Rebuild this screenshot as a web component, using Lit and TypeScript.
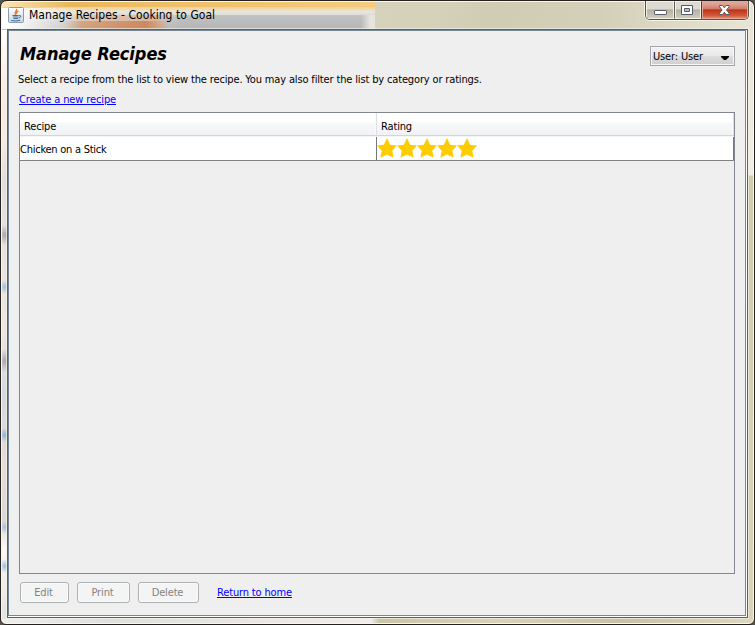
import { LitElement, html, css, svg } from "lit";
import { customElement, state } from "lit/decorators.js";

interface Recipe {
  name: string;
  rating: number;
}

@customElement("title-bar")
export class TitleBar extends LitElement {
  static styles = css`
    :host { display: flex; height: 26px; color: #000; }
    .java { width: 16px; height: 16px; margin: 5px 0 0 6px; flex: none; }
    .title { margin: 3px 0 0 5px; font-size: 12px; line-height: 20px; white-space: nowrap; letter-spacing: 0.045px; flex: 1; }
    .controls { display: flex; height: 18px; margin: -1px 4px 0 0; border: 1px solid #55534b; border-top: 0; border-radius: 0 0 5px 5px; overflow: hidden; box-shadow: 0 1px 0 #f4f1e3, -1px 0 0 #f4f1e3, 1px 0 0 #f4f1e3; }
    .control { box-sizing: border-box; width: 28px; border: 1px solid #f3f1e8; background: linear-gradient(#dddbd0 0 45%, #b2b0a2 48%, #cfcdbd); }
    .control + .control { border-left: 1px solid #5d5b52; width: 27px; box-shadow: inset 1px 0 0 #f3f1e8; }
    .control + .control.close { width: 47px; border-color: #e6a89b; border-left-color: #6d2c20; background: linear-gradient(#e0a496 0 10%, #d07a66 45%, #bb3218 48%, #d6583a 85%, #e18a6a); box-shadow: inset 1px 0 0 #e6a89b; }
    .control svg { display: block; width: 100%; height: 100%; }
  `;

  render() {
    return html`
      <svg class="java" viewBox="0 0 16 16">
        <defs>
          <linearGradient id="tile" x2="0" y2="1"><stop stop-color="#fff" /><stop offset="1" stop-color="#c9d6df" /></linearGradient>
        </defs>
        <rect x=".5" y=".5" width="15" height="15" rx="1" fill="url(#tile)" stroke="#8a9caa" />
        <path d="M8.6 1.8C9.6 4 5.4 4.8 7.6 8M10.4 3.8C8 5 8.2 6 9 7" fill="none" stroke="#e57a20" stroke-width="1.3" />
        <path d="M4.5 8.5h6.2M5 10h5.4M5.6 11.5h4.4M3.2 13.5q4.8 1 9-.2M11 8.7q2.6-.4 1.7 1.1-.6.9-2 1.2" fill="none" stroke="#426f93" />
      </svg>
      <div class="title">Manage Recipes - Cooking to Goal</div>
      <div class="controls">
        <div class="control">
          <svg viewBox="0 0 26 16"><rect x="7.5" y="8.5" width="12" height="4" rx=".6" fill="#fff" stroke="#565a66" /></svg>
        </div>
        <div class="control">
          <svg viewBox="0 0 25 16">
            <path d="M6.5 3.500h11v9h-11z" fill="#fff" stroke="#565a66" />
            <path d="M9.500 6.500h5v3h-5z" fill="#c1bfb3" stroke="#565a66" />
          </svg>
        </div>
        <div class="control close">
          <svg viewBox="0 0 45 16"><path d="M17.500 3.500h3l1.800 2.300 1.800-2.300h3v1.300L24.500 8l2.600 3.200v1.300h-3l-1.800-2.300-1.800 2.300h-3v-1.300L20.100 8l-2.600-3.200z" fill="#fff" stroke="#565a66" /></svg>
        </div>
      </div>
    `;
  }
}

@customElement("star-rating")
export class StarRating extends LitElement {
  static properties = { value: { type: Number } };
  declare value: number;

  static styles = css`
    :host { display: flex; }
    svg { width: 20px; height: 22px; display: block; }
  `;

  render() {
    return Array.from({ length: this.value ?? 0 }, () => html`
      <svg viewBox="0 0 20 22">${svg`<path fill="#fc0" d="M10 1l3.200 6.700 6.800.9-4.700 5.100 1.300 7.100L10 17.600l-6.600 3.200 1.300-7.100L0 8.600l6.800-.9z" />`}</svg>
    `);
  }
}

@customElement("recipe-table")
export class RecipeTable extends LitElement {
  static properties = { recipes: { attribute: false } };
  declare recipes: Recipe[];

  static styles = css`
    :host { display: block; box-sizing: border-box; border: 1px solid #828790; }
    .row { display: grid; grid-template-columns: 357px 357px; }
    .head { height: 24px; background: linear-gradient(#fff 0 9px, #f7f8fa 10px, #f1f2f4 22px, #d5d5d5 22px 23px, #f4f4f4 23px); }
    .head .cell { padding-left: 4px; line-height: 28px; height: 22px; border-right: 1px solid #dfe0e2; box-shadow: inset -1px 0 0 #fafafa; }
    .body { height: 23px; background: #fff; border-bottom: 1px solid #828282; }
    .body .cell { height: 23px; border-right: 1px solid #777; line-height: 26px; overflow: hidden; }
    .name { letter-spacing: -0.25px; }
  `;

  render() {
    return html`
      <div class="row head"><div class="cell">Recipe</div><div class="cell">Rating</div></div>
      ${(this.recipes ?? []).map((r) => html`
        <div class="row body">
          <div class="cell name">${r.name}</div>
          <div class="cell"><star-rating .value=${r.rating}></star-rating></div>
        </div>
      `)}
    `;
  }
}

@customElement("app-root")
export class AppRoot extends LitElement {
  @state() private recipes: Recipe[] = [{ name: "Chicken on a Stick", rating: 5 }];

  static styles = css`
    :host { display: block; width: 755px; height: 625px; background: #55534b; font: 11px "DejaVu Sans Condensed", "DejaVu Sans", sans-serif; font-stretch: condensed; letter-spacing: -0.15px; color: #000; }
    .window {
      box-sizing: border-box; height: 625px; border: 1px solid #25211f; border-radius: 7px 7px 6px 6px; padding: 1px; box-shadow: inset 0 0 0 1px #fbf6e8;
      background:
        linear-gradient(90deg, #fff 8px, #fff0 80px) 0 7px / 80px 21px no-repeat,
        linear-gradient(90deg, transparent 62px, #d9935eaa 80px, #cf733cbb 145px, #d9935e99 158px, transparent 168px) 0 20px / 374px 8px no-repeat,
        linear-gradient(90deg, transparent 62px, #eabf9c99 85px, #e0a47a99 155px, transparent 168px) 0 14px / 374px 6px no-repeat,
        linear-gradient(90deg, transparent 155px, #aaabad77 180px, #aaabad77 360px, #e6e4dc 369px) 0 14px / 374px 14px no-repeat,
        linear-gradient(90deg, #fbe5b5, #e8b75d 70px, #eebd67 150px, #f5cc7d) 0 0 / 374px 6px no-repeat,
        linear-gradient(#f5cc7d 5px, #e9e6df 11px, #d2d2d2 16px, #bdbdbf) 0 0 / 374px 29px no-repeat,
        linear-gradient(105deg, transparent 420px, #c8c4a955 480px, transparent 570px) 0 0 / 100% 28px no-repeat,
        linear-gradient(90deg, #dad6be, #d4cfb8 600px, #e8e5d7) 0 0 / 100% 28px no-repeat,
        radial-gradient(ellipse 8px 10px at 4px 206px, #aaa5aa, transparent) 0 28px / 8px 590px no-repeat,
        radial-gradient(ellipse 8px 7px at 4px 258px, #a1bfdd, transparent) 0 28px / 8px 590px no-repeat,
        radial-gradient(ellipse 8px 12px at 4px 332px, #aaa7ad, transparent) 0 28px / 8px 590px no-repeat,
        radial-gradient(ellipse 8px 7px at 4px 406px, #91b3d7, transparent) 0 28px / 8px 590px no-repeat,
        radial-gradient(ellipse 8px 7px at 4px 498px, #a8c0dc, transparent) 0 28px / 8px 590px no-repeat,
        radial-gradient(ellipse 8px 7px at 4px 537px, #9dbde2, transparent) 0 28px / 8px 590px no-repeat,
        linear-gradient(#fff, #fbeadf 60px, #f6eae2 110px, #e1dedd 150px, #efe6e0 300px, #d5d8dd 365px, #e7dcd8 440px, #ddd6d4 490px, #fdf9f4 520px, #e6e4e2 580px) 0 28px / 8px 590px no-repeat,
        linear-gradient(#e8e5d7, #f0eee7 146px, #d0ccb0 147px, #d8d2b9) 100% 28px / 8px 590px no-repeat,
        linear-gradient(90deg, #eee, #dfdfdf 110px, #f0eeec 370px, #c8c5a9 378px, #d7d3ba 500px, #c5c2a7 620px, #ddd7c0) 0 100% / 100% 8px no-repeat;
    }
    .client {
      display: flex; flex-direction: column; box-sizing: border-box; margin: 1px 5px 0 5px; height: 589px;
      border: 1px solid #5e605b; outline: 1px solid #f7f3e5aa; padding: 0 1px 1px 0; background: #fff;
    }
    .pane { flex: 1; display: flex; flex-direction: column; border: 1px solid #75889a; background: #efefef; padding: 0 10px; }
    header { display: flex; height: 81px; justify-content: space-between; }
    h1 { margin: 12px 0 0 1px; font: italic bold 18px/22px "DejaVu Sans Condensed", "DejaVu Sans", sans-serif; font-stretch: condensed; letter-spacing: -0.05px; }
    p { margin: 7px 0 0 -1px; line-height: 16px; white-space: nowrap; }
    a { color: #00f; text-decoration: underline; text-underline-offset: 1px; }
    .create { display: block; margin: 4px 0 0; line-height: 16px; letter-spacing: -0.12px; }
    .user { display: flex; justify-content: space-between; box-sizing: border-box; width: 85px; height: 20px; margin-top: 15px; padding: 0 4px 0 2px; border: 1px solid #a5a5ac; box-shadow: inset 0 0 0 1px #f6f6f6; background: linear-gradient(#f2f2f2, #e9e9e9 48%, #dcdcdc 52%, #cfcfcf); line-height: 19px; }
    .user svg { width: 8px; height: 5px; margin: 9px 1px 0 0; }
    recipe-table { height: 462px; width: 716px; }
    footer { display: flex; padding: 8px 0 0 1px; }
    button { box-sizing: border-box; height: 21px; margin: 0 8px 0 0; padding: 0 2px 1px 0; border: 1px solid #adb2b5; border-radius: 3px; box-shadow: inset 0 0 0 1px #fafafa; background: #f4f4f4; font: inherit; font-stretch: inherit; letter-spacing: inherit; color: #838383; }
    .edit { width: 49px; }
    .print { width: 53px; }
    .delete { width: 61px; }
    .home { margin-left: 10px; line-height: 22px; }
  `;

  render() {
    return html`
      <div class="window">
        <title-bar></title-bar>
        <div class="client">
          <main class="pane">
            <header>
              <div>
                <h1>Manage Recipes</h1>
                <p>Select a recipe from the list to view the recipe. You may also filter the list by category or ratings.</p>
                <a class="create">Create a new recipe</a>
              </div>
              <div class="user"><span>User: User</span><svg viewBox="0 0 8 5"><path d="M0 0h8v1L5 4H3L0 1z" /></svg></div>
            </header>
            <recipe-table .recipes=${this.recipes}></recipe-table>
            <footer>
              <button class="edit" disabled>Edit</button>
              <button class="print" disabled>Print</button>
              <button class="delete" disabled>Delete</button>
              <a class="home">Return to home</a>
            </footer>
          </main>
        </div>
      </div>
    `;
  }
}
